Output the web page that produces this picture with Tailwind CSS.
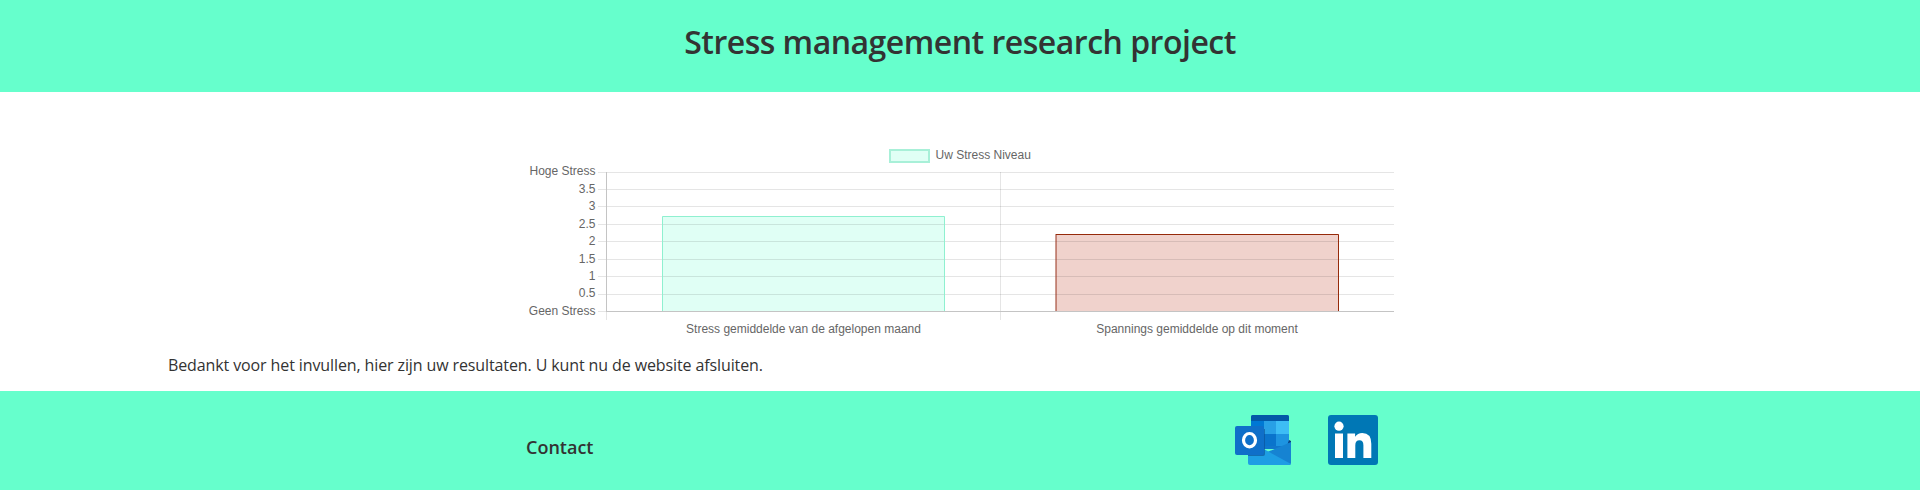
<!DOCTYPE html>
<html lang="nl">
<head>
<meta charset="utf-8">
<title>Stress management research project</title>
<script src="https://cdn.jsdelivr.net/npm/@tailwindcss/browser@4"></script>
</head>
<body class="flex h-[490px] flex-col overflow-hidden bg-white font-['Open_Sans',sans-serif] text-[#333333]">
<header class="flex h-[92px] shrink-0 justify-center bg-[#66ffcc] pt-[20px]">
  <h1 class="text-[32px] leading-[44px] font-semibold tracking-[-0.5px] whitespace-nowrap">Stress management research project</h1>
</header>
<main class="h-[299px] shrink-0 px-[168px] pt-[48px]">
  <svg class="mx-auto block h-[204px] w-[872px] font-['Liberation_Sans',Arial,sans-serif] text-[12px]" viewBox="524 140 872 204" fill="#666666">
    <rect x="890" y="150" width="39" height="12" fill="#e0fff5" stroke="#a8f0d8" stroke-width="2"/>
    <text x="935.5" y="159">Uw Stress Niveau</text>
    <rect x="662" y="216" width="283" height="95" fill="#66ffcc" fill-opacity=".2"/>
    <rect x="1056" y="234" width="283" height="77" fill="#b42000" fill-opacity=".2"/>
    <path d="M598 172.5H1394M598 189.5H1394M598 206.5H1394M598 224.5H1394M598 241.5H1394M598 259.5H1394M598 276.5H1394M598 294.5H1394M1000.5 172V320M606.5 311V320M598 311.5H606" stroke="#000" stroke-opacity=".1" fill="none"/>
    <path d="M606.5 172V311M606 311.5H1394" stroke="#c4c4c4" fill="none"/>
    <path d="M662.5 311V216.5H944.5V311" fill="none" stroke="#8ff0d0"/>
    <path d="M1056 311V234" fill="none" stroke="#96301a" stroke-width="1"/><path d="M1056 234.5H1338.5V311" fill="none" stroke="#962a0a"/>
    <g text-anchor="end">
      <text x="595.5" y="175">Hoge Stress</text><text x="595.5" y="193">3.5</text><text x="595.5" y="210">3</text>
      <text x="595.5" y="228">2.5</text><text x="595.5" y="245">2</text><text x="595.5" y="263">1.5</text>
      <text x="595.5" y="280">1</text><text x="595.5" y="297">0.5</text><text x="595.5" y="315">Geen Stress</text>
    </g>
    <g text-anchor="middle"><text x="803.5" y="333">Stress gemiddelde van de afgelopen maand</text><text x="1197" y="333">Spannings gemiddelde op dit moment</text></g>
  </svg>
  <p class="mt-[9px] text-[16px] leading-[24px] tracking-[-0.11px] whitespace-nowrap">Bedankt voor het invullen, hier zijn uw resultaten. U kunt nu de website afsluiten.</p>
</main>
<footer class="h-[99px] shrink-0 bg-[#66ffcc]">
  <div class="mx-auto flex w-[868px] justify-between pt-[24px]">
    <h3 class="mt-[19px] text-[18px] leading-[26px] font-semibold">Contact</h3>
    <div class="mr-[16px] flex gap-[37px]">
      <svg class="h-[50px] w-[56px]" viewBox="0 0 56 50" aria-label="Outlook">
        <path d="M16 2q0-2 2-2h34q2 0 2 2v32H16z" fill="#1076cc"/>
        <path d="M16 6V2q0-2 2-2h34q2 0 2 2v4z" fill="#0358a7"/>
        <path d="M16 6h13v13H16z" fill="#0078d4"/><path d="M29 6h12v13H29z" fill="#28a0e6"/><path d="M41 6h13v13H41z" fill="#3dbdf5"/>
        <path d="M29 19h12v12H29z" fill="#0a74cc"/><path d="M41 19h13v12H41z" fill="#1e94e0"/>
        <path d="m54 25 2 1v4l-4 1z" fill="#0a3c7d"/>
        <path d="M56 27v21q0 2-2 2H30V38z" fill="#1683d2"/>
        <path d="M13 33h14l29 16q-1 1-2 1H15q-2 0-2-2z" fill="#1e9ee4"/>
        <path d="M16 14h14v25q0 2-2 2H13v-3z" fill="#0b4f91" fill-opacity=".6"/>
        <rect y="11" width="29" height="29" rx="2" fill="#0f6fc9"/>
        <ellipse cx="14.5" cy="25.2" rx="6" ry="6.7" fill="none" stroke="#fff" stroke-width="3.2"/>
      </svg>
      <svg class="h-[50px] w-[50px]" viewBox="0 0 50 50" aria-label="LinkedIn">
        <rect width="50" height="50" rx="3" fill="#0077b5"/><g fill="#fff"><circle cx="11" cy="11.2" r="4.6"/><path d="M7 18.6h8V43H7zM19.4 18.6h7.7v3.2q2.4-3.8 7.2-3.8 9 0 9 10.8V43h-7.9V30.2q0-5-3.9-5-4.2 0-4.2 5V43h-7.9z"/></g>
      </svg>
    </div>
  </div>
</footer>
</body>
</html>
